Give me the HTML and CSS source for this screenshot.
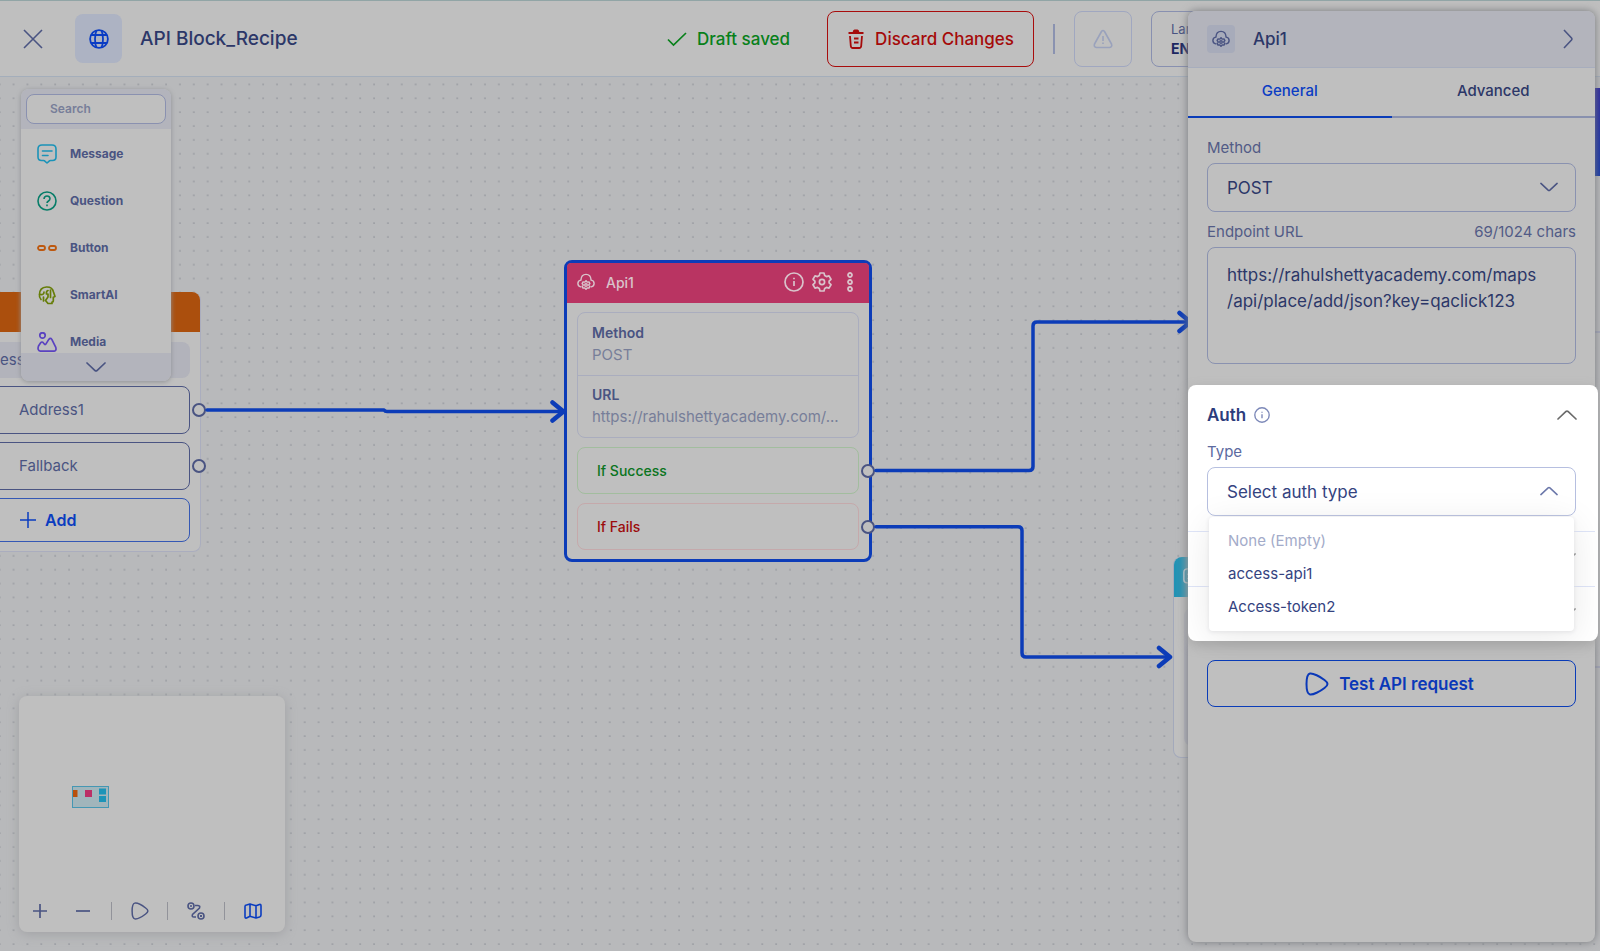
FILE: index.html
```html
<!DOCTYPE html>
<html lang="en">
<head>
<meta charset="utf-8">
<meta name="viewport" content="width=device-width, initial-scale=1">
<title>API Block_Recipe</title>
<link rel="stylesheet" href="styles.css">
</head>
<body>
<svg class="sprite" aria-hidden="true">
  <symbol id="i-cloud" viewBox="0 0 24 24"><g fill="none" stroke="currentColor" stroke-width="1.9" stroke-linecap="round" stroke-linejoin="round"><path d="M5 18.500C2.700 18 1.200 16.300 1.200 14c0-2.300 1.700-4.200 4-4.500C5.500 5 8.200 1.800 12 1.800s6.500 3.200 6.800 7.700c2.300.3 4 2.200 4 4.500 0 2.300-1.500 4-3.800 4.500"/><circle cx="12" cy="16" r="1.700"/><path d="M12 10.200l1.500 2 2.500-.3 1.200 2.200-1.600 1.900 1.600 1.900-1.200 2.200-2.500-.3-1.500 2-1.500-2-2.500.3-1.200-2.200L8.400 16l-1.600-1.900L8 11.900l2.500.3z"/></g></symbol>
  <symbol id="i-down" viewBox="0 0 20 12"><path d="M1 2l8 7.500q1 .8 2 0L19 2" fill="none" stroke="currentColor" stroke-width="1.700" stroke-linecap="round"/></symbol>
  <symbol id="i-up" viewBox="0 0 20 12"><path d="M1 10l8-7.500q1-.8 2 0l8 7.500" fill="none" stroke="currentColor" stroke-width="1.700" stroke-linecap="round"/></symbol>
  <symbol id="i-play" viewBox="0 0 24 24"><path d="M5 1.500C2.500 2 1.500 6 1.500 12s1 10 3.500 10.500c3 .5 10-3 14.500-6.500 4-3 4-5 0-8C15 4.500 8 1 5 1.500z" fill="none" stroke="currentColor" stroke-width="2"/></symbol>
  <symbol id="i-info" viewBox="0 0 20 20"><circle cx="10" cy="10" r="9" fill="none" stroke="currentColor" stroke-width="1.700"/><path d="M10 9v5M10 5.800v1.400" stroke="currentColor" stroke-width="1.700"/></symbol>
  <symbol id="i-message" viewBox="0 0 20 20"><path d="M5 1h10q4 0 4 4v8q0 3.500-3.500 3.500H13.500q-1 0-1.600.8L10 19l-1.900-1.700q-.6-.8-1.600-.8H4.500Q1 16.500 1 13V5q0-4 4-4zM5.500 7h9.500M5.500 11.500h5.500" fill="none" stroke="currentColor" stroke-width="1.600" stroke-linecap="round" stroke-linejoin="round"/></symbol>
</svg>

<div class="app">
  <header class="topbar">
    <button class="close" aria-label="Close"><svg width="20" height="20" viewBox="0 0 20 20"><path d="M1 1l18 18M19 1L1 19" stroke="currentColor" stroke-width="1.600"/></svg></button>
    <span class="globe"><svg width="20" height="20" viewBox="0 0 20 20" fill="none" stroke="currentColor" stroke-width="1.800"><circle cx="10" cy="10" r="8.900"/><path d="M2 6h16M2 14h16M7.500 1.500C5.500 6 5.500 14 7.500 18.500M12.500 1.500c2 4.500 2 12.500 0 17"/></svg></span>
    <h1 class="title">API Block_Recipe</h1>
    <div class="actions">
      <span class="saved"><svg width="20" height="16" viewBox="0 0 20 16"><path d="M1 8.500l5.500 5.500L19 2" fill="none" stroke="currentColor" stroke-width="1.700"/></svg>Draft saved</span>
      <button class="discard"><svg width="16" height="20" viewBox="0 0 16 20" fill="none" stroke="currentColor" stroke-width="1.800"><path d="M.5 4h15" stroke-width="2"/><path d="M4.500 3.500Q5 .5 6.500.5h3q1.500 0 2 3z" fill="currentColor" stroke="none"/><path d="M2 7l.8 10q.2 2 2 2h6.400q1.800 0 2-2L14 7M6 9.500h4.500M6 13.500h4.500"/></svg>Discard Changes</button>
      <span class="divider"></span>
      <button class="warn" aria-label="Warnings"><svg width="20" height="20" viewBox="0 0 20 20" fill="none" stroke="currentColor" stroke-width="1.600"><path d="M8.500 2.500q1.500-2 3 0l7 12.500q1 3-2 3.500h-13q-3-.5-2-3.500zM10 7v5M10 13.500v1.600" stroke-linejoin="round"/></svg></button>
      <button class="language"><span class="language-label">Language</span><span class="language-value">EN</span></button>
    </div>
  </header>

  <main class="canvas">
    <svg class="edges" aria-hidden="true">
      <defs><pattern id="dots" x="-7.300" y="0.400" width="13.865" height="13.865" patternUnits="userSpaceOnUse"><circle cx="7" cy="7" r=".9" fill="#94979d"/></pattern></defs>
      <rect width="100%" height="100%" fill="url(#dots)"/>
      <rect class="far-card" x="1210" y="254" width="430" height="2"/>
      <rect class="far-card" x="1210" y="589" width="430" height="2"/>
    </svg>

    <section class="node node-left">
      <header class="node-bar bar-orange"></header>
      <div class="left-body">
        <p class="left-text">ess</p>
        <div class="choice">Address1<i class="port"></i></div>
        <div class="choice">Fallback<i class="port"></i></div>
        <button class="add"><svg width="16" height="16" viewBox="0 0 16 16"><path d="M8 0v16M0 8h16" stroke="currentColor" stroke-width="1.500"/></svg>Add</button>
      </div>
    </section>

    <section class="node node-api">
      <header class="node-bar bar-pink">
        <svg width="18" height="18"><use href="#i-cloud"/></svg>
        <h2 class="node-name">Api1</h2>
        <svg width="20" height="20"><use href="#i-info"/></svg>
        <svg width="20" height="20" viewBox="0 0 20 20" fill="none" stroke="currentColor" stroke-width="1.700" stroke-linejoin="round"><path d="M8 1h4l.7 2.600 1.700 1 2.600-.7 2 3.400-1.900 1.900v1.600l1.900 1.900-2 3.400-2.600-.7-1.700 1L12 19H8l-.7-2.600-1.700-1-2.600.7-2-3.400 1.900-1.900V9.200L1 7.300l2-3.400 2.600.7 1.700-1z"/><circle cx="10" cy="10" r="2.600"/></svg>
        <svg class="dots-icon" width="8" height="20" viewBox="0 0 8 20" fill="none" stroke="currentColor" stroke-width="1.800"><circle cx="4" cy="3" r="2"/><circle cx="4" cy="10" r="2"/><circle cx="4" cy="17" r="2"/></svg>
      </header>
      <div class="api-body">
        <dl class="facts">
          <div class="fact"><dt>Method</dt><dd>POST</dd></div>
          <div class="fact"><dt>URL</dt><dd>https://rahulshettyacademy.com/...</dd></div>
        </dl>
        <div class="outcome success">If Success<i class="port"></i></div>
        <div class="outcome fails">If Fails<i class="port"></i></div>
      </div>
    </section>

    <section class="node node-message">
      <header class="node-bar bar-cyan"><svg width="18" height="18"><use href="#i-message"/></svg></header>
      <div class="message-body"></div>
    </section>

    <svg class="edges" aria-hidden="true" fill="none" stroke="#0c3cb8" stroke-width="3.500" stroke-linejoin="round" stroke-linecap="round">
      <path d="M207 333H384q1 1.500 3 1.500H563"/>
      <path d="M876 393.500H1029q4 0 4-4V249q0-4 4-4H1190"/>
      <path d="M876 449.800H1018q4 0 4 4V576q0 4 4 4H1169"/>
      <path stroke-width="4.500" d="M552.500 325.500l11 9-11 9M1179.500 236l11 9-11 9M1159 571l11 9-11 9"/>
    </svg>

    <nav class="palette">
      <div class="palette-head"><input class="search" type="search" placeholder="Search" aria-label="Search blocks"></div>
      <ul class="palette-list">
        <li class="block"><svg class="c-cyan" width="20" height="20"><use href="#i-message"/></svg>Message</li>
        <li class="block"><svg class="c-green" width="20" height="20" viewBox="0 0 20 20" fill="none" stroke="currentColor" stroke-width="1.600"><circle cx="10" cy="10" r="9"/><path d="M7 8q.3-3 3-3t3 2.600q0 1.400-1.500 2.400T10 12M10 13.500v1.800"/></svg>Question</li>
        <li class="block"><svg class="c-orange" width="20" height="20" viewBox="0 0 20 20" fill="none" stroke="currentColor" stroke-width="1.800"><rect x="1" y="8" width="7" height="4" rx="2"/><rect x="12" y="8" width="7" height="4" rx="2"/></svg>Button</li>
        <li class="block"><svg class="c-olive" width="20" height="20" viewBox="0 0 20 20" fill="none" stroke="currentColor" stroke-width="1.700" stroke-linejoin="round" stroke-linecap="round"><path d="M4 14.500Q2 12.500 2.500 9.500 2.500 2.500 9.500 2 15.500 1.800 16.500 7l1.500 4.500-1.700.8V16q0 1-1.300 1v1.500H11L8.500 15.500 11 12V9M3.500 9.500q3.500.5 3.500-2.500M6.500 12v4M11 5.500q-2 .5-1.500 3.500M13.500 5v7.500"/></svg>SmartAI</li>
        <li class="block"><svg class="c-violet" width="20" height="20" viewBox="0 0 20 20" fill="none" stroke="currentColor" stroke-width="1.700" stroke-linejoin="round"><circle cx="5.500" cy="3.500" r="2.700"/><path d="M1.500 14l2-3q1.500-2 3 0l1 1.200q.8.800 1.500-.3l2.800-4.500q1.600-2.200 3 0l4 8q.9 3.600-2 3.800H3.500Q0 18.500 1.500 14z"/></svg>Media</li>
      </ul>
      <button class="palette-more" aria-label="More blocks"><svg width="20" height="12"><use href="#i-down"/></svg></button>
    </nav>

    <section class="minimap">
      <svg class="map" viewBox="0 0 38 22" width="38" height="22"><rect x=".5" y=".5" width="36" height="21" fill="#a1b5bb" stroke="#4597b3"/><path d="M1 4h4.500v7H1z" fill="#b8500c"/><path d="M13 4h7v7h-7z" fill="#bb2f66"/><path d="M27 2.500h7v6h-7zM27 10h7v6h-7z" fill="#1c94b8"/></svg>
      <div class="tools">
        <button class="tool" aria-label="Zoom in"><svg width="14" height="14" viewBox="0 0 14 14"><path d="M7 0v14M0 7h14" stroke="currentColor" stroke-width="1.700"/></svg></button>
        <button class="tool" aria-label="Zoom out"><svg width="14" height="14" viewBox="0 0 14 14"><path d="M0 7h14" stroke="currentColor" stroke-width="1.700"/></svg></button>
        <span class="tool-line"></span>
        <button class="tool" aria-label="Run"><svg width="18" height="18"><use href="#i-play"/></svg></button>
        <span class="tool-line"></span>
        <button class="tool" aria-label="Route"><svg width="18" height="18" viewBox="0 0 18 18" fill="none" stroke="currentColor" stroke-width="1.600"><circle cx="4" cy="4" r="3"/><circle cx="14" cy="14" r="3"/><path d="M3 4h2M13 14h2M14 13v2M8 3.500h3q2.500.3 1.500 2.500L5.500 12.500Q4.500 15 7 15h2"/></svg></button>
        <span class="tool-line"></span>
        <button class="tool tool-on" aria-label="Map"><svg width="18" height="16" viewBox="0 0 18 16" fill="none" stroke="currentColor" stroke-width="1.600" stroke-linejoin="round"><path d="M1 3.500Q1 2 2.500 2L6 1l6 1.800L15.500 1.500Q17 1 17 3v9q0 1.500-1.500 2L12 15l-6-1.800L2.500 15Q1 15.500 1 13.500zM6 1v12M12 3v12"/></svg></button>
      </div>
    </section>
    <span class="edge-tab"></span>
  </main>

  <aside class="inspector">
    <header class="inspector-head">
      <span class="head-icon"><svg width="18" height="18"><use href="#i-cloud"/></svg></span>
      <h2 class="head-name">Api1</h2>
      <button class="collapse" aria-label="Collapse"><svg width="10" height="20" viewBox="0 0 10 20"><path d="M1 1l7.500 8q.8 1 0 2L1 19" fill="none" stroke="currentColor" stroke-width="1.600"/></svg></button>
    </header>
    <div class="tabs" role="tablist">
      <button class="tab tab-on" role="tab" aria-selected="true">General</button>
      <button class="tab" role="tab" aria-selected="false">Advanced</button>
    </div>
    <div class="form">
      <label class="label" for="method">Method</label>
      <div class="select-wrap">
        <select class="select" id="method"><option>POST</option></select>
        <svg class="caret" width="18" height="12"><use href="#i-down"/></svg>
      </div>
      <div class="label-row"><label class="label" for="url">Endpoint URL</label><span class="label">69/1024 chars</span></div>
      <textarea class="url" id="url" spellcheck="false">https://rahulshettyacademy.com/maps
/api/place/add/json?key=qaclick123</textarea>
    </div>
    <div class="spotlight">
      <section class="auth">
        <div class="auth-head"><h3 class="auth-title">Auth</h3><svg class="auth-info" width="16" height="16"><use href="#i-info"/></svg><button class="fold" aria-label="Fold"><svg width="20" height="12"><use href="#i-up"/></svg></button></div>
        <label class="label auth-label" for="auth">Type</label>
        <div class="select-wrap">
          <select class="select select-lit" id="auth"><option>Select auth type</option></select>
          <svg class="caret caret-lit" width="18" height="12"><use href="#i-up"/></svg>
          <ul class="menu">
            <li class="option option-off">None (Empty)</li>
            <li class="option">access-api1</li>
            <li class="option">Access-token2</li>
          </ul>
        </div>
      </section>
      <div class="folded"><svg width="20" height="12"><use href="#i-down"/></svg></div>
      <div class="folded"><svg width="20" height="12"><use href="#i-down"/></svg></div>
    </div>
    <div class="run"><button class="test"><svg width="24" height="24"><use href="#i-play"/></svg>Test API request</button></div>
  </aside>
</div>
</body>
</html>
```

FILE: styles.css
```css
* { box-sizing: border-box; }
body, h1, h2, h3, p, ul, dl, dd { margin: 0; padding: 0; }
body { font-family: "Inter", "Noto Sans", sans-serif; color: #4a5482; background: #b8b9bb; }
ul { list-style: none; }
svg { display: block; flex: none; }
button, select, textarea, input { font: inherit; color: inherit; background: none; border: 0; padding: 0; margin: 0; }
.sprite { position: absolute; width: 0; height: 0; }

.app { display: flex; flex-direction: column; height: 100vh; overflow: hidden; position: relative; }

.topbar { display: flex; align-items: center; height: 77px; flex: none; padding-left: 23px; background: #bfbfbf; border-top: 1px solid #91a5a6; border-bottom: 1px solid #a4aebb; }
.close { color: #4a5482; }
.globe { display: grid; place-items: center; width: 47px; height: 49px; margin-left: 32px; border-radius: 8px; background: #adb3c3; color: #0a3cc4; }
.title { margin-left: 18px; font-size: 19px; line-height: 28px; font-weight: 500; color: #2c3768; white-space: nowrap; }
.actions { display: flex; align-items: center; margin-left: auto; padding-right: 340px; }
.saved { display: flex; align-items: center; gap: 10px; margin-right: 37px; font-size: 17px; font-weight: 500; color: #08801a; }
.discard { display: flex; align-items: center; gap: 11px; height: 56px; padding: 0 19px 0 20px; border: 1px solid #a80d0d; border-radius: 8px; font-size: 17px; font-weight: 500; color: #a50a0a; white-space: nowrap; }
.divider { width: 2px; height: 30px; margin: 0 19px; background: #8a92b0; }
.warn { display: grid; place-items: center; width: 58px; height: 56px; border: 1px solid #a0a7c0; border-radius: 8px; color: #9aa2bc; }
.language { display: flex; flex-direction: column; justify-content: center; width: 109px; height: 56px; margin-left: 19px; padding-left: 19px; border: 1px solid #8890b0; border-radius: 8px; text-align: left; }
.language-label { font-size: 13px; line-height: 20px; }
.language-value { font-size: 14px; line-height: 20px; font-weight: 700; color: #1c2761; }

.canvas { position: relative; flex: 1; overflow: hidden; background: #b8b9bb; }
.edges { position: absolute; inset: 0; width: 100%; height: 100%; pointer-events: none; }
.far-card { fill: #a3a6b9; }
.edge-tab { position: absolute; right: 0; top: 11px; width: 12px; height: 88px; background: linear-gradient(#2a27a0, #1336a8); }

.node { position: absolute; background: #bfbfbf; }
.node-bar { display: flex; align-items: center; height: 40px; }
.port { position: absolute; top: 50%; width: 14px; height: 14px; margin-top: -7px; border: 2px solid #4a5482; border-radius: 50%; background: #bfbfbf; }

.node-left { left: -100px; top: 215px; width: 301px; border: 1px solid #aaadbe; border-top: 0; border-radius: 8px; }
.bar-orange { background: #ab4f0d; border-radius: 8px 8px 0 0; }
.left-body { display: flex; flex-direction: column; gap: 8px; padding: 10px 10px 9px; }
.left-text { height: 36px; padding-left: 89px; border-radius: 8px; background: #b2b3bb; font-size: 15px; line-height: 36px; }
.choice { position: relative; height: 48px; padding-left: 107px; border: 1px solid #4a5482; border-radius: 8px; font-size: 15px; line-height: 46px; }
.choice .port { right: -17px; }
.add { display: flex; align-items: center; gap: 9px; height: 44px; padding-left: 108px; border: 1px solid #3558b4; border-radius: 8px; font-size: 16px; font-weight: 600; color: #0a3cc0; }

.node-api { left: 564px; top: 183px; width: 308px; border: 3px solid #0c3cb8; border-radius: 8px; }
.bar-pink { padding: 0 15px 2px 10px; gap: 8px; background: #b93462; color: #d9c3cb; border-radius: 4px 4px 0 0; }
.node-name { flex: 1; margin-left: 3px; font-size: 14px; font-weight: 500; }
.dots-icon { margin-left: 6px; }
.api-body { display: flex; flex-direction: column; gap: 9px; padding: 9px 10px; }
.facts { border: 1px solid #aaadbe; border-radius: 8px; }
.fact { height: 62px; padding: 9px 14px 0; font-size: 14px; line-height: 22px; }
.fact + .fact { border-top: 1px solid #aaadbe; padding-top: 8px; }
.fact dt { font-weight: 600; }
.fact dd { color: #777e99; white-space: nowrap; font-size: 15px; }
.outcome { position: relative; height: 47px; padding-left: 19px; border: 1px solid; border-radius: 8px; font-size: 14px; line-height: 45px; font-weight: 500; }
.outcome .port { right: -17px; }
.success { color: #0a7420; border-color: #a2bd9e; }
.fails { color: #9c0c0c; border-color: #c5a9ab; }

.node-message { left: 1173px; top: 480px; width: 300px; border: 1px solid #a3a9bb; border-top: 0; border-radius: 8px; }
.bar-cyan { padding-left: 9px; background: #2293b4; color: #c3d5dc; border-radius: 8px 8px 0 0; }
.message-body { height: 138px; margin: 11px 10px; border-radius: 8px; background: #b2b3bb; }

.palette { position: absolute; left: 21px; top: 12px; width: 150px; border-radius: 8px; overflow: hidden; background: #bfbfbf; box-shadow: 0 1px 5px #8f9195; }
.palette-head { padding: 5px; height: 40px; background: #b3b4bc; }
.search { display: block; width: 100%; height: 30px; padding: 0 0 2px 23px; border: 1px solid #8a91b0; border-radius: 8px; background: #bfbfbf; font-size: 12px; font-weight: 600; outline: 0; }
.search::placeholder { color: #777e99; opacity: 1; }
.palette-list { height: 224px; overflow: hidden; padding-top: 1px; }
.block { display: flex; align-items: center; gap: 13px; height: 47px; padding-left: 16px; font-size: 12px; font-weight: 700; }
.palette-more { display: grid; place-items: center; width: 100%; height: 28px; background: #b3b4bc; color: #4a5482; }
.c-cyan { color: #1b93b8; } .c-green { color: #077d68; } .c-orange { color: #bd580f; } .c-olive { color: #667d08; } .c-violet { color: #5a42c0; }

.minimap { position: absolute; left: 19px; bottom: 19px; width: 266px; height: 236px; display: flex; flex-direction: column; border-radius: 8px; background: #bfbfbf; box-shadow: 0 2px 12px #a0a1a4; }
.map { margin: 90px 0 0 53px; }
.tools { display: flex; align-items: center; justify-content: space-between; margin-top: auto; padding: 0 17px 0 6px; height: 42px; }
.tool { display: grid; place-items: center; width: 30px; height: 30px; color: #4a5482; }
.tool-on { color: #0a3cc0; }
.tool-line { width: 1px; height: 18px; background: #92939a; }

.inspector { position: absolute; top: 11px; right: 5px; bottom: 9px; width: 407px; display: flex; flex-direction: column; border-radius: 8px; background: #bfbfbf; box-shadow: 0 0 8px #77797d; }
.inspector-head { display: flex; align-items: center; height: 57px; flex: none; padding: 0 22px 0 19px; border-bottom: 1px solid #a7adbd; border-radius: 8px 8px 0 0; background: #b3b4bc; }
.head-icon { display: grid; place-items: center; width: 28px; height: 28px; border-radius: 4px; background: #a7abba; }
.head-name { flex: 1; margin-left: 18px; font-size: 17px; font-weight: 500; color: #2c3768; }
.tabs { display: flex; flex: none; height: 50px; }
.tab { flex: 1; padding-bottom: 3px; border-bottom: 2px solid #8890ae; font-size: 15px; font-weight: 500; color: #2c3768; }
.tab-on { border-color: #0a3cb8; color: #0a3cc4; }
.form { display: flex; flex-direction: column; padding: 20px 19px 21px; }
.label { font-size: 15px; line-height: 20px; color: #525b86; }
.label-row { display: flex; justify-content: space-between; margin: 10px 0 5px; }
.select-wrap { position: relative; }
.form .select-wrap { margin-top: 5px; }
.select { display: block; appearance: none; width: 100%; height: 49px; padding-left: 19px; border: 1px solid #8a92b0; border-radius: 8px; font-size: 17px; color: #2c3768; }
.caret { position: absolute; right: 18px; top: 18px; pointer-events: none; }
.url { display: block; width: 100%; height: 117px; padding: 14px 19px; resize: none; border: 1px solid #8a92b0; border-radius: 8px; font-size: 17px; line-height: 26px; color: #2c3768; word-break: break-all; outline: 0; overflow: hidden; }
.spotlight { margin-right: -3px; border-radius: 8px; background: #fff; box-shadow: 0 4px 12px #a8a8a8; }
.auth { height: 146px; padding: 18px 21px 0 19px; }
.auth .select-wrap { margin-right: 1px; }
.auth-head { display: flex; align-items: center; height: 24px; margin-bottom: 15px; }
.auth-title { font-size: 17px; font-weight: 600; color: #2c3c7c; }
.auth-info { margin-left: 8px; color: #7c88b8; }
.fold { margin-left: auto; color: #6a6a6a; }
.auth-label { display: block; margin-bottom: 5px; color: #5c6aa0; }
.select-lit { border-color: #b6bfe0; color: #34437f; background: #fff; }
.caret-lit { color: #6c78aa; }
.menu { position: absolute; z-index: 2; left: 2px; right: 2px; top: 50px; padding: 7px 0 8px; border-radius: 4px; background: #fff; box-shadow: 0 1px 4px #e2e2e4, 0 6px 36px rgba(0, 0, 0, .09); }
.option { height: 33px; padding-left: 19px; font-size: 15px; line-height: 33px; color: #34437f; }
.option-off { color: #a3abc9; }
.folded { display: flex; align-items: center; justify-content: flex-end; height: 55px; margin-right: 3px; padding: 0 19px 2px; border-top: 1px solid #dfe5f8; color: #6a6a6a; }
.run { padding: 19px; }
.test { display: flex; align-items: center; justify-content: center; gap: 10px; width: 100%; height: 47px; padding-right: 4px; border: 1px solid #0a3cb8; border-radius: 8px; font-size: 17px; font-weight: 600; color: #0a38b8; }
```
